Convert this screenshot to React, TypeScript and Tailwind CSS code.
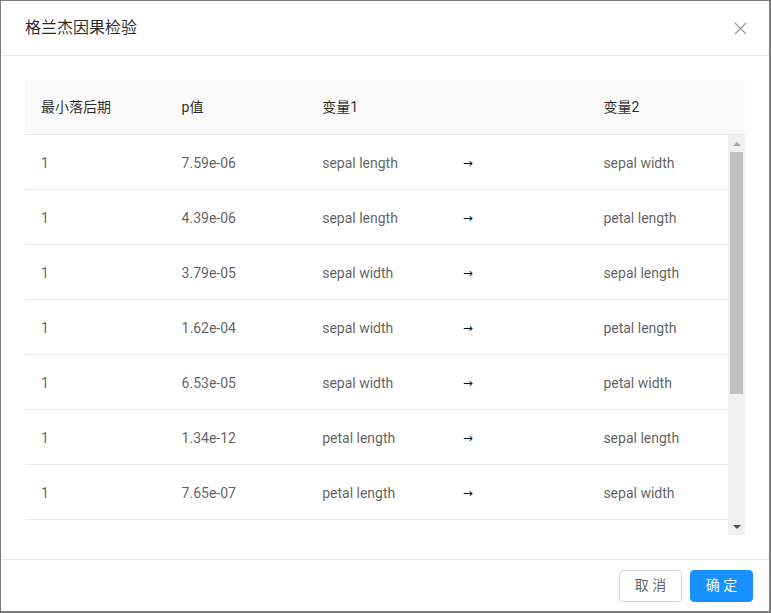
import React from "react";

type Row = { lag: number; p: string; from: string; to: string };

const rows: Row[] = [
  { lag: 1, p: "7.59e-06", from: "sepal length", to: "sepal width" },
  { lag: 1, p: "4.39e-06", from: "sepal length", to: "petal length" },
  { lag: 1, p: "3.79e-05", from: "sepal width", to: "sepal length" },
  { lag: 1, p: "1.62e-04", from: "sepal width", to: "petal length" },
  { lag: 1, p: "6.53e-05", from: "sepal width", to: "petal width" },
  { lag: 1, p: "1.34e-12", from: "petal length", to: "sepal length" },
  { lag: 1, p: "7.65e-07", from: "petal length", to: "sepal width" },
  { lag: 1, p: "2.11e-03", from: "petal length", to: "petal width" },
  { lag: 1, p: "5.08e-04", from: "petal width", to: "sepal length" },
  { lag: 1, p: "9.72e-05", from: "petal width", to: "sepal width" },
  { lag: 1, p: "3.16e-03", from: "petal width", to: "petal length" },
];

const font = {
  fontFamily: 'Roboto, "Noto Sans CJK SC", sans-serif',
};

function Scrollbar() {
  // fake classic scrollbar, the thumb sits at the top
  return (
    <div className="flex w-[17px] shrink-0 flex-col bg-[#f0f0f0]">
      <div className="flex h-[17px] items-center justify-center">
        <div className="h-0 w-0 border-x-[4px] border-b-[4px] border-x-transparent border-b-[#a3a3a3]" />
      </div>
      <div className="flex-1 px-[2px]">
        <div className="h-[242px] bg-[#c1c1c1]" />
      </div>
      <div className="flex h-[17px] items-center justify-center">
        <div className="h-0 w-0 border-x-[4px] border-t-[4px] border-x-transparent border-t-[#505050]" />
      </div>
    </div>
  );
}

export default function App() {
  return (
    <div
      className="flex h-[613px] w-[771px] flex-col border-b-2 border-l border-r-2 border-t border-[#7b7b7b] bg-white"
      style={font}
    >
      {/* header */}
      <div className="flex h-[55px] shrink-0 items-center justify-between border-b border-[#e8e8e8] pl-6 pr-[22px]">
        <h1 className="text-[16px] leading-[22px] text-[rgba(0,0,0,0.85)]">
          格兰杰因果检验
        </h1>
        <svg width="13" height="13" viewBox="0 0 13 13">
          <path d="M1 1 L12 12 M12 1 L1 12" stroke="#999" strokeWidth="1.2" fill="none" />
        </svg>
      </div>

      {/* body */}
      <div className="flex flex-1 flex-col p-6">
        <div className="flex h-[55px] shrink-0 border-b border-[#e8e8e8] bg-[#fafafa] text-[14px] text-[rgba(0,0,0,0.85)]">
          <div className="grid flex-1 grid-cols-5 items-center">
            <div className="pl-4">最小落后期</div>
            <div className="pl-4">p值</div>
            <div className="pl-4">变量1</div>
            <div className="pl-4"></div>
            <div className="pl-4">变量2</div>
          </div>
          <div className="w-[17px] shrink-0" />
        </div>
        <div className="flex h-[400px] shrink-0">
          <div className="flex-1 overflow-hidden">
            {rows.map((r, i) => (
              <div
                key={i}
                className="grid h-[55px] grid-cols-5 items-center border-b border-[#e8e8e8] pt-[2px] text-[14px] text-[rgba(0,0,0,0.65)]"
              >
                <div className="pl-4">{r.lag}</div>
                <div className="pl-4">{r.p}</div>
                <div className="pl-4">{r.from}</div>
                <div className="pl-4 font-['DejaVu_Sans'] text-[12px] text-[#111]">→</div>
                <div className="pl-4">{r.to}</div>
              </div>
            ))}
          </div>
          <Scrollbar />
        </div>
      </div>

      {/* footer */}
      <div className="flex h-[52px] shrink-0 items-center justify-end gap-2 border-t border-[#e8e8e8] pl-4 pr-[16px]">
        <button className="h-8 w-[63px] rounded-[4px] border border-[#d9d9d9] bg-white text-[14px] text-[rgba(0,0,0,0.65)]">
          取 消
        </button>
        <button className="h-8 w-[63px] rounded-[4px] border border-[#1890ff] bg-[#1890ff] text-[14px] text-white">
          确 定
        </button>
      </div>
    </div>
  );
}
